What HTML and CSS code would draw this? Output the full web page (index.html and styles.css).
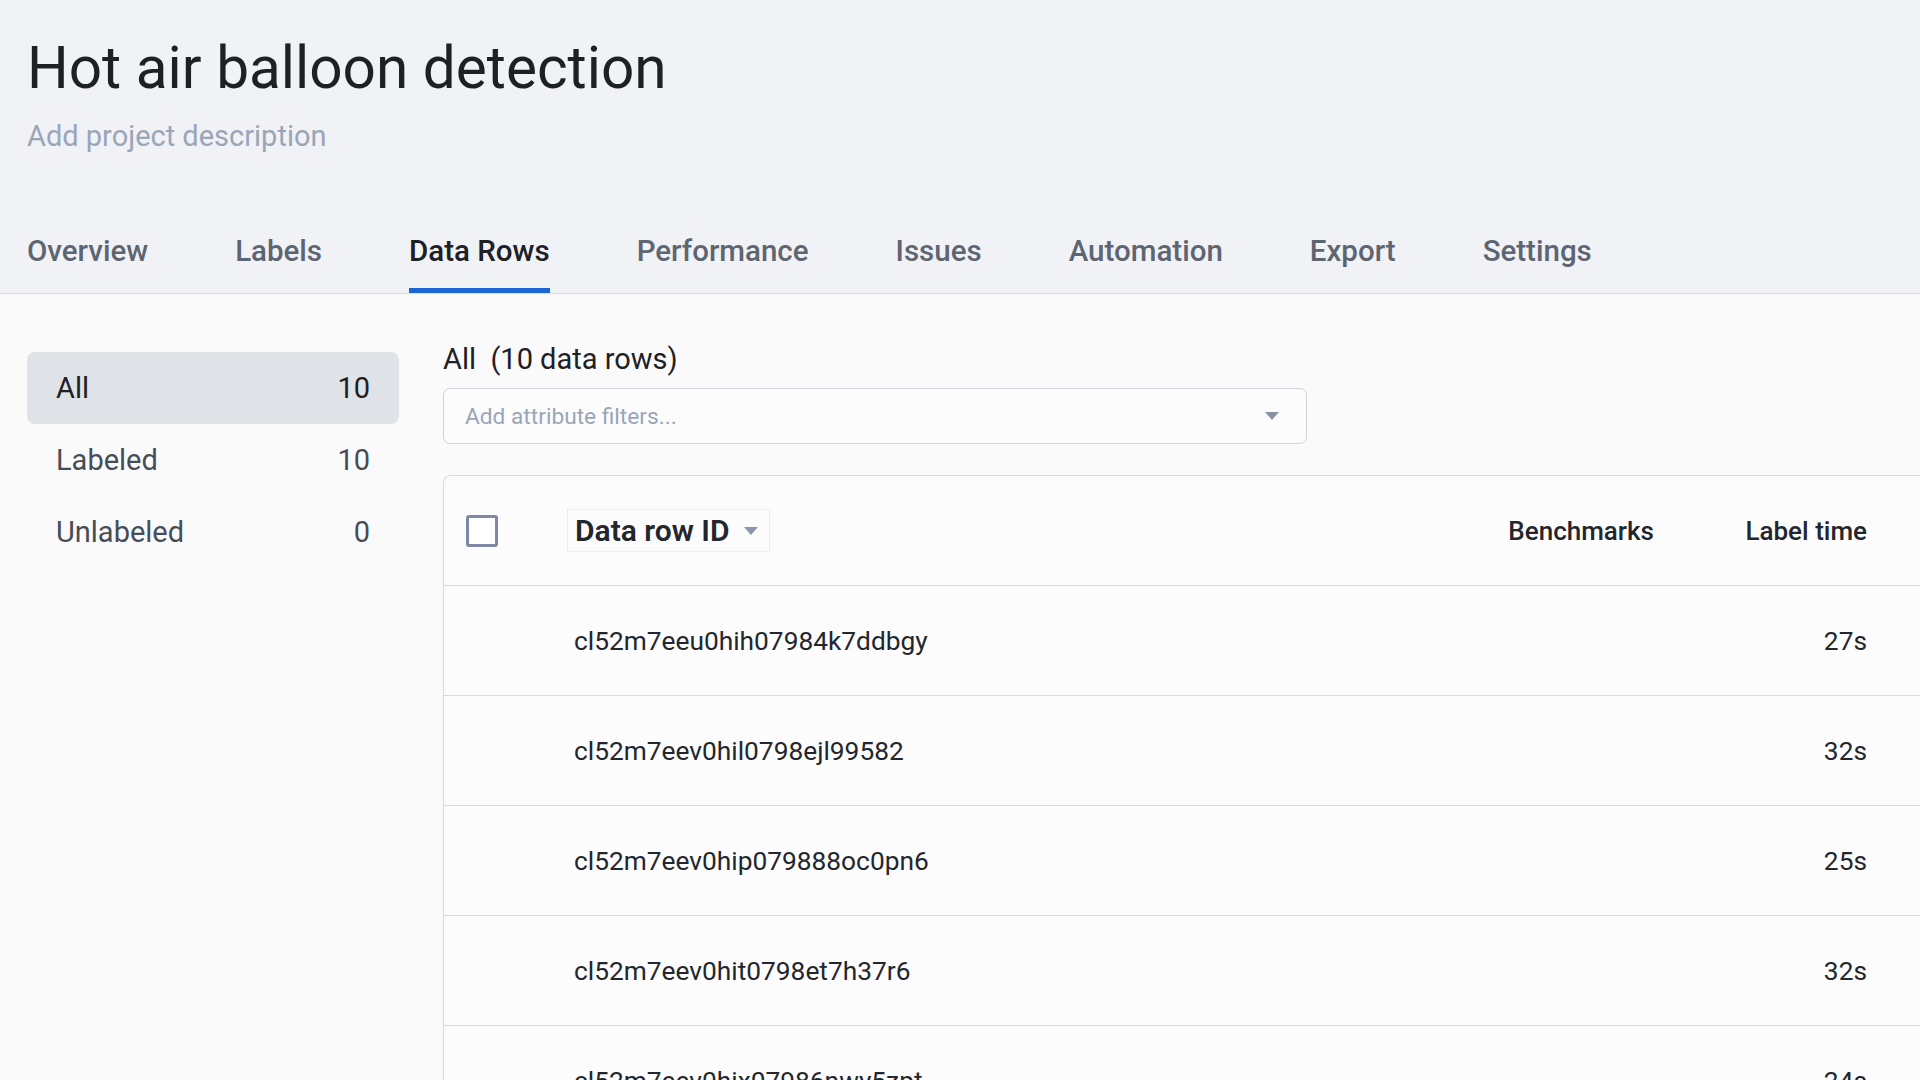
FILE: index.html
```html
<!DOCTYPE html>
<html lang="en">
<head>
    <meta charset="UTF-8">
    <meta name="viewport" content="width=device-width, initial-scale=1.0">
    <title>Hot air balloon detection</title>
    <link rel="stylesheet" href="styles.css">
</head>
<body>

    <div class="project-header">
        <h1>Hot air balloon detection</h1>
        <div class="project-desc">Add project description</div>
        <nav class="tabs">
            <a class="tab">Overview</a>
            <a class="tab">Labels</a>
            <a class="tab active">Data Rows</a>
            <a class="tab">Performance</a>
            <a class="tab">Issues</a>
            <a class="tab">Automation</a>
            <a class="tab">Export</a>
            <a class="tab">Settings</a>
        </nav>
    </div>

    <div class="content">
        <div class="sidebar">
            <div class="side-item selected"><span>All</span><span>10</span></div>
            <div class="side-item"><span>Labeled</span><span>10</span></div>
            <div class="side-item"><span>Unlabeled</span><span>0</span></div>
        </div>

        <div class="main">
            <div class="main-title">All&nbsp;&nbsp;(10 data rows)</div>
            <div class="filter">
                <span class="placeholder">Add attribute filters...</span>
                <svg class="caret" width="16" height="10" viewBox="0 0 16 10"><path d="M1 1h14l-7 8z" fill="#8a91a2"/></svg>
            </div>

            <div class="table">
                <div class="row head">
                    <div class="cell"><span class="checkbox"></span></div>
                    <div class="cell"><span class="sort">Data row ID
                        <svg width="16" height="10" viewBox="0 0 16 10"><path d="M1 1h14l-7 8z" fill="#8d96ab"/></svg></span></div>
                    <div class="cell num">Benchmarks</div>
                    <div class="cell num">Label time</div>
                </div>
                <div class="row">
                    <div class="cell"></div>
                    <div class="cell">cl52m7eeu0hih07984k7ddbgy</div>
                    <div class="cell num"></div>
                    <div class="cell num">27s</div>
                </div>
                <div class="row">
                    <div class="cell"></div>
                    <div class="cell">cl52m7eev0hil0798ejl99582</div>
                    <div class="cell num"></div>
                    <div class="cell num">32s</div>
                </div>
                <div class="row">
                    <div class="cell"></div>
                    <div class="cell">cl52m7eev0hip079888oc0pn6</div>
                    <div class="cell num"></div>
                    <div class="cell num">25s</div>
                </div>
                <div class="row">
                    <div class="cell"></div>
                    <div class="cell">cl52m7eev0hit0798et7h37r6</div>
                    <div class="cell num"></div>
                    <div class="cell num">32s</div>
                </div>
                <div class="row">
                    <div class="cell"></div>
                    <div class="cell">cl52m7eev0hix07986nwy5zpt</div>
                    <div class="cell num"></div>
                    <div class="cell num">24s</div>
                </div>
            </div>
        </div>
    </div>

</body>
</html>
```

FILE: styles.css
```css
html, body {
    height: 100%;
    overflow: hidden;
}
body {
    margin: 0;
    font-family: Roboto, "Noto Sans", sans-serif;
    background-color: #fafafb;
    color: #1f2328;
}
.project-header {
    background: #f1f2f5;
    padding: 32px 27px 0;
    border-bottom: 1px solid #d9dde5;
}
h1 {
    margin: 0;
    font-size: 58.5px;
    line-height: 72px;
    font-weight: 400;
    color: #1d2025;
}
.project-desc {
    margin-top: 14px;
    font-size: 29px;
    line-height: 36px;
    color: #9ba5b8;
}
.tabs {
    display: flex;
    gap: 87px;
    margin-top: 79px;
}
.tab {
    font-size: 29.5px;
    line-height: 36px;
    padding-bottom: 19px;
    border-bottom: 5px solid transparent;
    color: #5e6572;
    font-weight: 500;
}
.tab.active {
    color: #1d2025;
    border-bottom-color: #1b66d2;
}
.content {
    display: flex;
    gap: 44px;
    padding-left: 27px;
}
.sidebar {
    width: 372px;
    margin-top: 58px;
}
.side-item {
    display: flex;
    justify-content: space-between;
    align-items: center;
    height: 72px;
    padding: 0 29px;
    font-size: 29px;
    color: #474d57;
    border-radius: 8px;
}
.side-item.selected {
    background: #dfe2e7;
    color: #1d2025;
}
.main {
    flex: 1;
    margin-top: 49px;
}
.main-title {
    font-size: 29px;
    line-height: 32px;
    color: #1d2025;
}
.filter {
    display: flex;
    align-items: center;
    justify-content: space-between;
    width: 864px;
    height: 56px;
    box-sizing: border-box;
    margin-top: 13px;
    padding: 0 26px 0 21px;
    border: 1px solid #cfd4dc;
    border-radius: 7px;
    background: #fcfcfd;
}
.placeholder {
    font-size: 22.7px;
    color: #9ba5b8;
}
.table {
    margin-top: 31px;
    background: #fcfcfd;
    border: 1px solid #d6dbe3;
    border-right: none;
    border-radius: 8px 0 0 0;
}
.row {
    display: grid;
    grid-template-columns: 108px 1fr 300px 213px;
    align-items: center;
    height: 109px;
    padding: 0 53px 0 22px;
    border-top: 1px solid #d6dbe3;
    font-size: 26.3px;
    color: #23272d;
}
.row.head {
    height: 109px;
    border-top: none;
    font-size: 26px;
    font-weight: 500;
}
.cell.num {
    text-align: right;
}
.checkbox {
    display: block;
    width: 26px;
    height: 26px;
    border: 3px solid #7f89a6;
    border-radius: 3px;
    background: white;
}
.sort {
    display: inline-flex;
    align-items: center;
    gap: 14px;
    padding: 3px 10px 3px 7px;
    margin-left: -7px;
    border: 1px dotted #dde1e7;
    font-size: 30px;
    font-weight: 600;
}
```
